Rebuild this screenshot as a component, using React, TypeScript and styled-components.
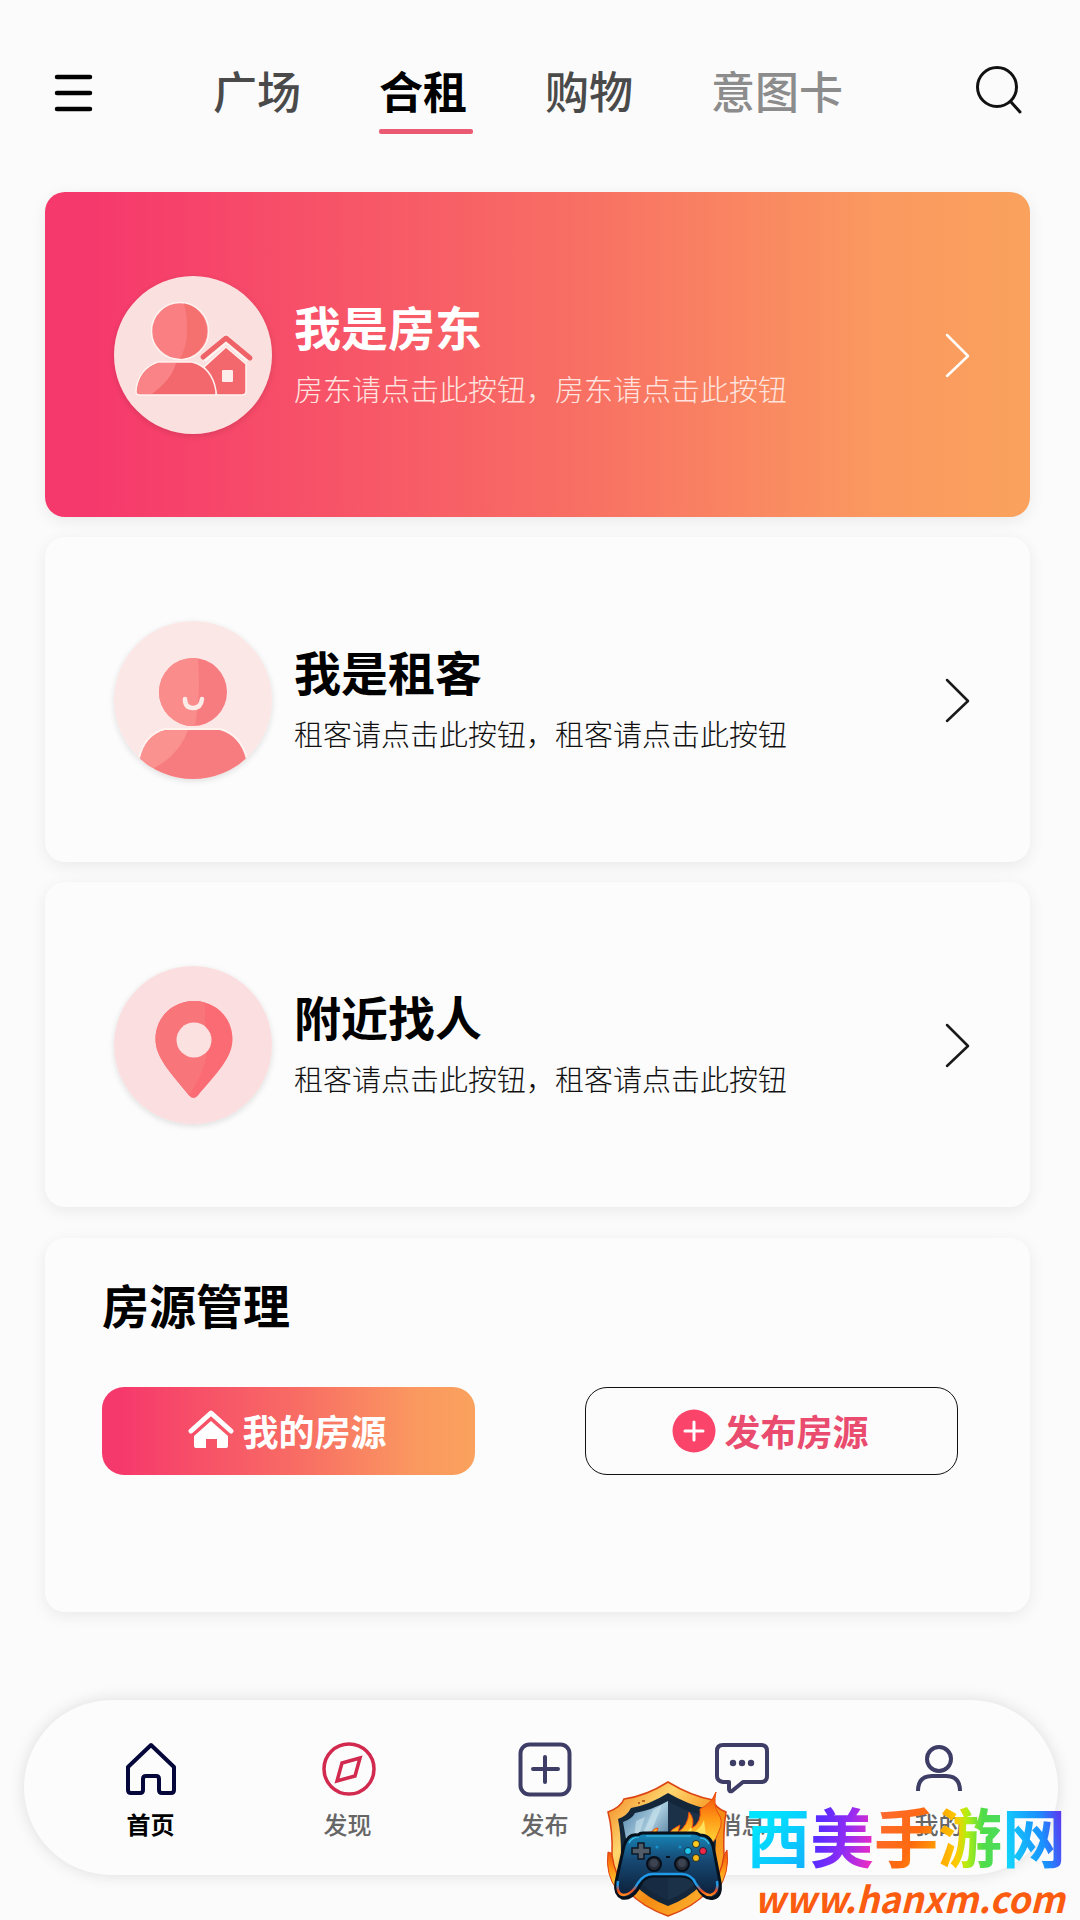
import React from "react";
import styled, { createGlobalStyle, css } from "styled-components";

const GlobalStyle = createGlobalStyle`
  * {
    box-sizing: border-box;
  }

  body {
    margin: 0;
    background: #fbfbfb;
    font-family: "Noto Sans CJK SC", "Noto Sans", sans-serif;
    color: #000;
  }

  button {
    font-family: inherit;
    cursor: pointer;
  }

  svg {
    display: block;
    flex-shrink: 0;
  }
`;

const warmGradient = "linear-gradient(90deg, #f6396c 5%, #f86c64 52%, #fa9860 84%, #faa25d 100%)";

const Page = styled.div`
  position: relative;
  min-height: 100vh;
  padding-bottom: 45px;
  overflow: hidden;
`;

const Header = styled.header`
  display: flex;
  align-items: center;
  padding: 60px 58px 68px 54px;
`;

const IconButton = styled.button`
  padding: 0;
  border: 0;
  background: none;
`;

const Tabs = styled.nav`
  display: flex;
  gap: 78px;
  margin: 0 auto 0 120px;
`;

const Tab = styled.a<{ $active?: boolean; $muted?: boolean }>`
  position: relative;
  height: 64px;
  font-size: 44px;
  line-height: 60px;
  font-weight: 500;
  text-decoration: none;
  white-space: nowrap;
  color: ${({ $muted }) => ($muted ? "#8c8c8c" : "#4a4a4a")};

  ${({ $active }) =>
    $active &&
    css`
      color: #000;
      font-weight: 700;

      &::after {
        content: "";
        position: absolute;
        left: 0;
        right: -6px;
        bottom: -10px;
        height: 5px;
        border-radius: 2px;
        background: #ea5a72;
      }
    `}
`;

const Main = styled.main`
  display: flex;
  flex-direction: column;
  gap: 20px;
  padding: 0 50px 0 45px;
`;

const cardSurface = css`
  border-radius: 20px;
  background: #fcfcfc;
  box-shadow: 0 4px 16px rgba(0, 0, 0, 0.07);
`;

const RoleCard = styled.button<{ $primary?: boolean }>`
  display: flex;
  align-items: center;
  width: 100%;
  padding: 84px 60px 83px 69px;
  border: 0;
  text-align: left;
  color: #1a1a1a;
  ${cardSurface}

  ${({ $primary }) =>
    $primary &&
    css`
      color: #fff;
      background: ${warmGradient};
    `}
`;

const Avatar = styled.span`
  width: 158px;
  height: 158px;
  border-radius: 50%;
  box-shadow: 0 2px 6px rgba(0, 0, 0, 0.12);
`;

const RoleText = styled.span`
  display: flex;
  flex-direction: column;
  gap: 12px;
  flex: 1;
  margin-left: 22px;
  padding-bottom: 6px;
`;

const RoleTitle = styled.span<{ $primary?: boolean }>`
  font-size: 47px;
  line-height: 60px;
  font-weight: 700;
  color: ${({ $primary }) => ($primary ? "#fff" : "#000")};
`;

const RoleHint = styled.span<{ $primary?: boolean }>`
  font-size: 29px;
  line-height: 40px;
  font-weight: 300;
  color: ${({ $primary }) => ($primary ? "#ffe3df" : "#111")};
`;

const Manage = styled.section`
  margin-top: 11px;
  padding: 36px 72px 137px 57px;
  ${cardSurface}
`;

const ManageTitle = styled.h2`
  margin: 0 0 53px;
  font-size: 47px;
  line-height: 60px;
  font-weight: 700;
`;

const Actions = styled.div`
  display: grid;
  grid-template-columns: 1fr 1fr;
  gap: 110px;
`;

const ActionButton = styled.button<{ $outline?: boolean }>`
  display: flex;
  align-items: center;
  justify-content: center;
  gap: 8px;
  height: 88px;
  padding: 0 2px 2px 0;
  border: 0;
  border-radius: 22px;
  font-size: 36px;
  line-height: 48px;
  font-weight: 700;
  color: #fff;
  background: ${warmGradient};

  ${({ $outline }) =>
    $outline &&
    css`
      border: 1px solid #111;
      color: #e94c6e;
      background: none;
    `}
`;

const BottomNav = styled.nav`
  display: grid;
  grid-template-columns: repeat(5, 1fr);
  margin: 88px 22px 0 24px;
  padding: 40px 21px 33px 28px;
  border-radius: 88px;
  background: #fcfcfc;
  box-shadow: 0 0 16px rgba(0, 0, 0, 0.12);
`;

const NavItem = styled.a<{ $active?: boolean }>`
  display: flex;
  flex-direction: column;
  align-items: center;
  gap: 8px;
  font-size: 24px;
  line-height: 36px;
  font-weight: ${({ $active }) => ($active ? 700 : 500)};
  text-decoration: none;
  color: ${({ $active }) => ($active ? "#000" : "#666")};
`;

const Watermark = styled.div`
  position: absolute;
  right: 0;
  bottom: 0;
  display: flex;
  width: 480px;
  height: 150px;
  pointer-events: none;
`;

const WatermarkText = styled.div`
  padding: 24px 0 0 6px;
  white-space: nowrap;
`;

const SiteName = styled.div`
  display: flex;
  font-size: 64px;
  line-height: 80px;
  font-weight: 700;
`;

const SiteChar = styled.span<{ $fill: string }>`
  background: ${({ $fill }) => $fill};
  background-clip: text;
  -webkit-background-clip: text;
  color: transparent;
`;

const SiteUrl = styled.div`
  padding-left: 8px;
  font-size: 36px;
  line-height: 46px;
  font-weight: 700;
  font-style: italic;
  color: #fb5c10;
`;

const MenuIcon = () => (
  <svg width="39" height="40" viewBox="0 0 39 40" stroke="#000" strokeWidth="4.500" strokeLinecap="round">
    <path d="M3 5h33M3 21h33M3 37h33" />
  </svg>
);

const SearchIcon = () => (
  <svg width="46" height="54" viewBox="0 0 46 54" fill="none" stroke="#111" strokeWidth="3" strokeLinecap="round">
    <circle cx="21" cy="22" r="19.500" />
    <path d="M35 37l9 10" />
  </svg>
);

const ChevronIcon = () => (
  <svg width="28" height="48" viewBox="0 0 28 48" fill="none" stroke="currentColor" strokeWidth="2.500" strokeLinecap="round" strokeLinejoin="round">
    <path d="M5 4l21 21L5 45" />
  </svg>
);

const LandlordIcon = () => (
  <svg width="158" height="158" viewBox="0 0 158 158">
    <circle cx="79" cy="79" r="79" fill="#fae1e0" />
    <g stroke="#fff3f0" strokeWidth="1.500">
      <path d="M90 91l22-20 20 17v27q0 4-4 4h-25z" fill="#f2686c" />
      <circle cx="66" cy="55" r="28.500" fill="#f97f82" />
      <path d="M70 27.500A28 28 0 0 1 66 83q7-12 7-30 0-15-3-25.500z" fill="#f4716f" stroke="none" />
      <path d="M26 119q-4 0-4-4 2-22 22-29h34q20 5 24 29v4z" fill="#f2686c" />
      <path d="M26 118q-3 0-3-3 2-21 21-28h18q-4 16-24 31z" fill="#f98386" stroke="none" />
    </g>
    <path d="M89 83l23-20 23 20" fill="none" stroke="#fff3f0" strokeWidth="8" />
    <path d="M89 81l23-19 24 20" fill="none" stroke="#ef6368" strokeWidth="5" strokeLinecap="round" strokeLinejoin="round" />
    <rect x="108" y="94" width="11" height="12" rx="1" fill="#fdecea" />
  </svg>
);

const TenantIcon = () => (
  <svg width="158" height="158" viewBox="0 0 158 158">
    <defs>
      <clipPath id="tenantClip">
        <circle cx="79" cy="79" r="79" />
      </clipPath>
      <clipPath id="tenantHead">
        <circle cx="79" cy="71" r="34" />
      </clipPath>
    </defs>
    <circle cx="79" cy="79" r="79" fill="#fce7e7" />
    <g clipPath="url(#tenantClip)">
      <path d="M25 160v-22q5-24 26-30h55q21 6 27 30v22z" fill="#f77c80" stroke="#fff3f0" strokeWidth="2" />
      <path d="M26 138q5-24 26-29h22q-9 25-34 38H26z" fill="#fa9290" />
    </g>
    <circle cx="79" cy="71" r="34" fill="#f77c80" />
    <path clipPath="url(#tenantHead)" d="M40 30h43q5 38-3 80H40z" fill="#fa8d8c" />
    <path d="M71 78q0 9 8 9t9-9" fill="none" stroke="#fdebe7" strokeWidth="4.500" strokeLinecap="round" />
  </svg>
);

const PinIcon = () => (
  <svg width="158" height="158" viewBox="0 0 158 158">
    <defs>
      <clipPath id="pinClip">
        <path d="M80 35c22 0 38.500 17 38.500 38 0 19-15 33-35 57q-4 4-8 0c-19-24-34-38-34-57C41.500 52 58 35 80 35z" />
      </clipPath>
    </defs>
    <circle cx="79" cy="79" r="79" fill="#fbdfe0" />
    <g clipPath="url(#pinClip)">
      <rect x="40" y="30" width="82" height="106" fill="#fa6b73" />
      <path d="M40 30h51v30q10 32-18 72H40z" fill="#f8757a" />
    </g>
    <circle cx="80" cy="74" r="17.500" fill="#fbe1e0" />
  </svg>
);

const HouseSolidIcon = () => (
  <svg width="46" height="42" viewBox="0 0 46 42">
    <path d="M3 22L23 4l20 18" fill="none" stroke="#fff" strokeWidth="5" strokeLinecap="round" strokeLinejoin="round" />
    <path d="M23 12l17 15v10q0 2-2 2H29v-9H18v9H8q-2 0-2-2V27z" fill="#fff" />
  </svg>
);

const PlusSolidIcon = () => (
  <svg width="44" height="46" viewBox="0 0 44 46">
    <circle cx="22" cy="24" r="21.500" fill="#fb446a" />
    <path d="M22 15v18M13 24h18" stroke="#fff" strokeWidth="3" strokeLinecap="round" />
  </svg>
);

const navIconProps = {
  width: 58,
  height: 58,
  viewBox: "0 0 58 58",
  fill: "none",
  strokeWidth: 4,
  strokeLinejoin: "round" as const,
  strokeLinecap: "round" as const,
};

const HomeIcon = () => (
  <svg {...navIconProps} stroke="#05063a">
    <path d="M29 5L6 27v23q0 3 3 3h9q3 0 3-3V39q0-3 3-3h10q3 0 3 3v11q0 3 3 3h9q3 0 3-3V27z" />
  </svg>
);

const CompassIcon = () => (
  <svg {...navIconProps} stroke="#d2294f">
    <circle cx="30" cy="29" r="25" strokeWidth="3.500" />
    <path d="M41 18l-18 5-5 18 18-5z" strokeWidth="3.500" strokeLinejoin="miter" />
  </svg>
);

const PlusIcon = () => (
  <svg {...navIconProps} stroke="#3e3d66">
    <rect x="4.500" y="4.500" width="49" height="50" rx="9" />
    <path d="M29 17v25M17 29h25" />
  </svg>
);

const MessageIcon = () => (
  <svg {...navIconProps} stroke="#3e3d66">
    <path d="M10 5h38q6 0 6 6v25q0 6-6 6H30l-11 9q-3 1-3-2v-7h-6q-6-1-6-6V11q0-6 6-6z" />
    <g fill="#3e3d66" stroke="none">
      <circle cx="20" cy="23" r="3.200" />
      <circle cx="29" cy="23" r="3.200" />
      <circle cx="38" cy="23" r="3.200" />
    </g>
  </svg>
);

const PersonIcon = () => (
  <svg {...navIconProps} stroke="#3e3d66">
    <circle cx="29" cy="19" r="12" />
    <path d="M8 51q0-15 14-15h14q14 0 14 15" strokeLinecap="butt" />
  </svg>
);

const ShieldLogo = () => (
  <svg width="140" height="150" viewBox="0 0 140 150">
    <defs>
      <linearGradient id="gold" x1="0" y1="0" x2="1" y2="1">
        <stop offset="0" stopColor="#f07a17" />
        <stop offset=".3" stopColor="#ffd66e" />
        <stop offset=".6" stopColor="#f58a12" />
        <stop offset="1" stopColor="#ffc23b" />
      </linearGradient>
      <linearGradient id="steel" x1="0" y1="0" x2="1" y2="1">
        <stop offset="0" stopColor="#4d7fa6" />
        <stop offset=".5" stopColor="#a6c9dc" />
        <stop offset="1" stopColor="#315d82" />
      </linearGradient>
      <linearGradient id="flame" x1="0" y1="0" x2="0" y2="1">
        <stop offset="0" stopColor="#f04b0c" />
        <stop offset=".5" stopColor="#ff9815" />
        <stop offset="1" stopColor="#ffdc3e" />
      </linearGradient>
      <linearGradient id="pad" x1="0" y1="0" x2="0" y2="1">
        <stop offset="0" stopColor="#1687b9" />
        <stop offset=".4" stopColor="#174a75" />
        <stop offset="1" stopColor="#0b1c34" />
      </linearGradient>
      <linearGradient id="grip" x1="0" y1="0" x2="0" y2="1">
        <stop offset=".5" stopColor="#1f9bea" />
        <stop offset=".8" stopColor="#f04b20" />
        <stop offset="1" stopColor="#ff8a24" />
      </linearGradient>
    </defs>
    <path d="M8 82q-3 22 9 38l14-2V90zM127 80q-3 7-9 12v28q12-18 9-40z" fill="url(#flame)" stroke="#e04410" />
    <path d="M68 12Q91 26 113 30q2 8 13 12-3 20-2 43-5 43-56 61Q17 128 12 85 13 61 8 42q13-5 16-13 22-3 44-17z" fill="url(#gold)" stroke="#dc4312" strokeWidth="1.500" />
    <path d="M68 23q19 11 39 16 3 7 11 10-2 17-3 36-5 35-47 51-42-16-47-51 0-22-3-36 9-3 13-11 18-3 37-15z" fill="#13263a" />
    <path d="M68 31v58H28q-1-19-5-37 9-3 12-9 17-3 33-12z" fill="url(#steel)" />
    <path d="M68 31q17 10 34 14 3 6 11 9-2 14-3 31-5 31-42 45z" fill="#1b3147" />
    <path d="M68 130V90H29q7 28 39 40z" fill="#172b43" />
    <path d="M36 51l9-4-13 38zM53 40l9-5-20 50h-8z" fill="#d8edf4" opacity=".5" />
    <path d="M46 65q3-4 6-3 2-4 6-4l-2 6 10 3zM66 67q6-9 14-12l-2 7q10-6 11-20 6 7 3 16 10-6 8-19 11-5 16-17-3 13 2 21 6 8 1 18-2 8-9 14l-12-10z" fill="url(#flame)" stroke="#ed4d10" />
    <path d="M79 66q8-2 12-9l1 6q8-3 12-13l2 16-8 4z" fill="#ffe05a" />
    <path d="M43 63h50q4 0 7 2 10 0 13 11l7 36q2 14-6 16-9 3-17-11-4-11-16-11H53q-10 0-15 13-7 11-16 9-8-4-6-16l8-36q4-13 14-11 2-2 5-2z" fill="url(#pad)" stroke="#07111d" strokeWidth="3" />
    <path d="M18 111q-2 14 6 14 8-1 14-12 6-9 15-9h28q11 0 15 10 8 12 15 11 8-3 6-14" fill="none" stroke="url(#grip)" strokeWidth="2.500" />
    <path d="M46 66h45M29 73q3-6 10-6M100 68q6 0 9 6" fill="none" stroke="#3fc8f1" strokeWidth="1.200" />
    <path d="M38 73h6v5h6v6h-6v5h-6v-5h-6v-6h6z" fill="#535c69" stroke="#0d1724" strokeWidth="1.500" />
    <circle cx="54" cy="94" r="7" fill="#252b37" stroke="#080e17" strokeWidth="2" />
    <circle cx="54" cy="93" r="4" fill="#3c4350" />
    <circle cx="82" cy="94" r="7" fill="#252b37" stroke="#080e17" strokeWidth="2" />
    <circle cx="82" cy="93" r="4" fill="#3c4350" />
    <g stroke="#0a1828" strokeWidth=".8">
      <circle cx="96" cy="74" r="3.500" fill="#ffcb20" />
      <circle cx="96" cy="88" r="3.500" fill="#f5b916" />
      <circle cx="88" cy="81" r="3.500" fill="#20c6ee" />
      <circle cx="103" cy="81" r="3.500" fill="#ee2748" />
    </g>
    <circle cx="57" cy="77" r="1.500" fill="#1595cc" />
    <circle cx="80" cy="77" r="1.500" fill="#1595cc" />
    <path d="M66 87h4" stroke="#061321" strokeWidth="2" />
    <path d="M42 31h3M38 33h2" stroke="#a84a08" strokeWidth="1.500" />
  </svg>
);

const roles = [
  { title: "我是房东", hint: "房东请点击此按钮，房东请点击此按钮", Icon: LandlordIcon, primary: true },
  { title: "我是租客", hint: "租客请点击此按钮，租客请点击此按钮", Icon: TenantIcon },
  { title: "附近找人", hint: "租客请点击此按钮，租客请点击此按钮", Icon: PinIcon },
];

const navItems = [
  { label: "首页", Icon: HomeIcon, active: true },
  { label: "发现", Icon: CompassIcon },
  { label: "发布", Icon: PlusIcon },
  { label: "消息", Icon: MessageIcon },
  { label: "我的", Icon: PersonIcon },
];

const siteChars = [
  { char: "西", fill: "linear-gradient(135deg, #00e4ff 30%, #12b4ff 90%)" },
  { char: "美", fill: "linear-gradient(100deg, #5a2cff 20%, #8f2cf5 55%, #f02cc0 95%)" },
  { char: "手", fill: "linear-gradient(120deg, #ff6a2c 20%, #ff6a10 60%, #ffb000 95%)" },
  { char: "游", fill: "linear-gradient(90deg, #ffb000 12%, #ffc800 28%, #b4ee10 45%, #4fdc4a 70%, #4cdc5a 95%)" },
  { char: "网", fill: "linear-gradient(80deg, #12d4fa 10%, #1a90ff 60%, #5a3cf0 88%)" },
];

export default () => (
  <Page>
    <GlobalStyle />
    <Header>
      <IconButton aria-label="菜单">
        <MenuIcon />
      </IconButton>
      <Tabs>
        <Tab href="#square">广场</Tab>
        <Tab href="#share" $active>
          合租
        </Tab>
        <Tab href="#shop">购物</Tab>
        <Tab href="#cards" $muted>
          意图卡
        </Tab>
      </Tabs>
      <IconButton aria-label="搜索">
        <SearchIcon />
      </IconButton>
    </Header>

    <Main>
      {roles.map(({ title, hint, Icon, primary }) => (
        <RoleCard key={title} $primary={primary}>
          <Avatar>
            <Icon />
          </Avatar>
          <RoleText>
            <RoleTitle $primary={primary}>{title}</RoleTitle>
            <RoleHint $primary={primary}>{hint}</RoleHint>
          </RoleText>
          <ChevronIcon />
        </RoleCard>
      ))}

      <Manage>
        <ManageTitle>房源管理</ManageTitle>
        <Actions>
          <ActionButton>
            <HouseSolidIcon />
            我的房源
          </ActionButton>
          <ActionButton $outline>
            <PlusSolidIcon />
            发布房源
          </ActionButton>
        </Actions>
      </Manage>
    </Main>

    <BottomNav>
      {navItems.map(({ label, Icon, active }) => (
        <NavItem key={label} href="#" $active={active}>
          <Icon />
          {label}
        </NavItem>
      ))}
    </BottomNav>

    <Watermark>
      <ShieldLogo />
      <WatermarkText>
        <SiteName>
          {siteChars.map(({ char, fill }) => (
            <SiteChar key={char} $fill={fill}>
              {char}
            </SiteChar>
          ))}
        </SiteName>
        <SiteUrl>www.hanxm.com</SiteUrl>
      </WatermarkText>
    </Watermark>
  </Page>
);
